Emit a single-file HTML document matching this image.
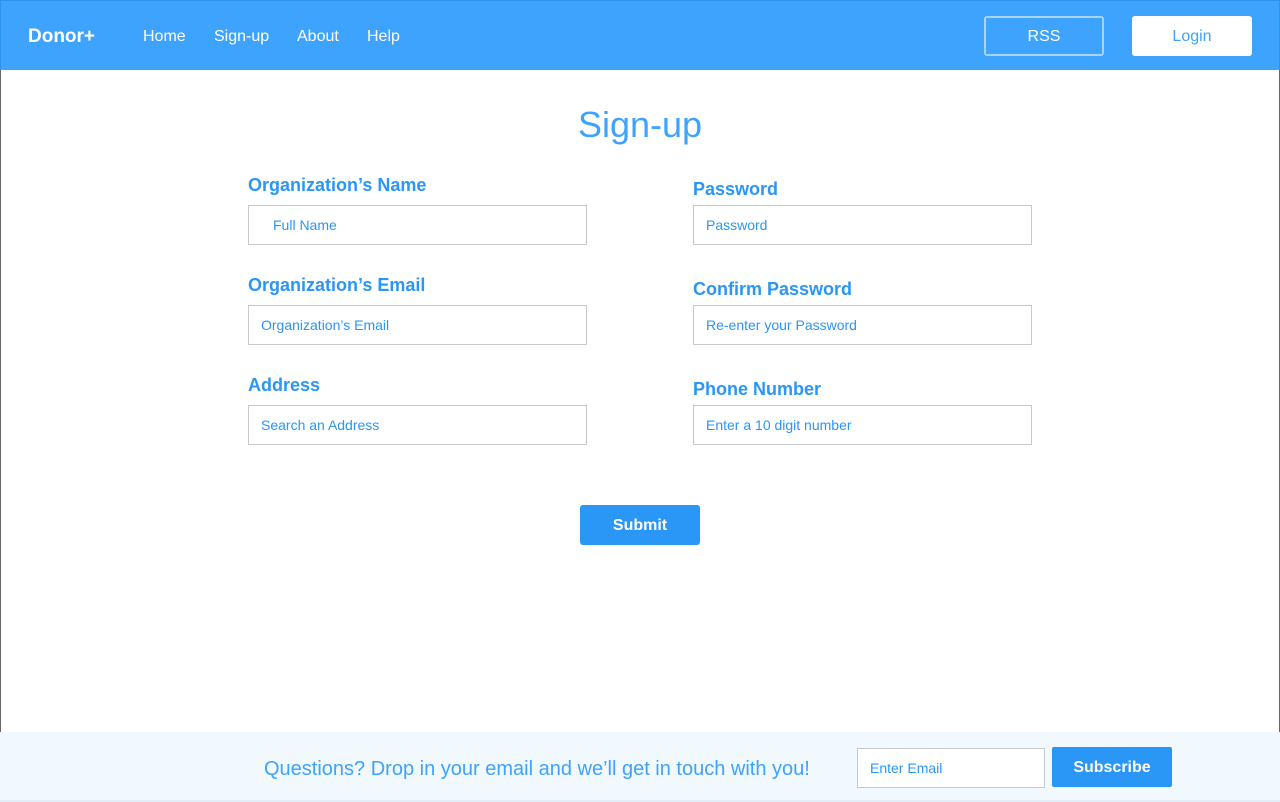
<!DOCTYPE html>
<html><head><meta charset="utf-8"><style>
*{box-sizing:border-box;margin:0;padding:0}
body{width:1280px;height:802px;position:relative;background:#fff;font-family:"Liberation Sans",Arial,sans-serif;overflow:hidden}
.nav{position:absolute;left:0;top:0;width:1280px;height:70px;background:#3ea3fc;border:1px solid #2f90ee;border-bottom:none}
.nav span{position:absolute;color:#fff;font-size:16px;top:26px}
.frame{position:absolute;left:0;top:70px;width:1280px;height:662px;border-left:1px solid #666;border-right:1px solid #666}
.btn{position:absolute;top:15px;width:120px;height:40px;border-radius:3px;font-size:16px;text-align:center;line-height:41px}
h1{position:absolute;top:104px;left:0;width:1280px;text-align:center;font-weight:normal;font-size:36px;color:#3ea3fc}
.lbl{position:absolute;color:#2a96f5;font-weight:bold;font-size:18px}
.in{position:absolute;width:339px;height:40px;border:1px solid #c8c8c8;color:#2a96f5;font-size:14px;line-height:38px;padding-left:12px}
.foot{position:absolute;left:0;top:732px;width:1280px;height:70px;background:#f1f8fe;border-bottom:2px solid #e2edf8}
</style></head><body>
<div class="nav">
<span style="left:27px;font-weight:bold;font-size:19px;top:25px">Donor+</span>
<span style="left:142px;top:27px">Home</span><span style="left:213px;top:27px">Sign-up</span><span style="left:296px;top:27px">About</span><span style="left:366px;top:27px">Help</span>
<div class="btn" style="left:983px;border:2px solid #a8d4fb;color:#fff;line-height:37px">RSS</div>
<div class="btn" style="left:1131px;background:#fff;color:#3ea3fc">Login</div>
</div>
<div class="frame"></div>
<h1>Sign-up</h1>
<div class="lbl" style="left:248px;top:175px">Organization’s Name</div>
<div class="in" style="left:248px;top:205px;padding-left:24px">Full Name</div>
<div class="lbl" style="left:248px;top:275px">Organization’s Email</div>
<div class="in" style="left:248px;top:305px">Organization’s Email</div>
<div class="lbl" style="left:248px;top:375px">Address</div>
<div class="in" style="left:248px;top:405px">Search an Address</div>
<div class="lbl" style="left:693px;top:179px">Password</div>
<div class="in" style="left:693px;top:205px">Password</div>
<div class="lbl" style="left:693px;top:279px">Confirm Password</div>
<div class="in" style="left:693px;top:305px">Re-enter your Password</div>
<div class="lbl" style="left:693px;top:379px">Phone Number</div>
<div class="in" style="left:693px;top:405px">Enter a 10 digit number</div>
<div style="position:absolute;left:580px;top:505px;width:120px;height:40px;background:#2a96f5;border-radius:3px;color:#fff;font-weight:bold;font-size:16px;text-align:center;line-height:41px">Submit</div>
<div class="foot">
<div style="position:absolute;left:264px;top:26px;font-size:20px;color:#3ea3fc">Questions? Drop in your email and we’ll get in touch with you!</div>
<div style="position:absolute;left:857px;top:16px;width:188px;height:40px;background:#fff;border:1px solid #c8c8c8;color:#2a96f5;font-size:14px;line-height:38px;padding-left:12px">Enter Email</div>
<div style="position:absolute;left:1052px;top:15px;width:120px;height:40px;background:#2a96f5;border-radius:2px;color:#fff;font-weight:bold;font-size:16px;text-align:center;line-height:41px">Subscribe</div>
</div>
</body></html>
